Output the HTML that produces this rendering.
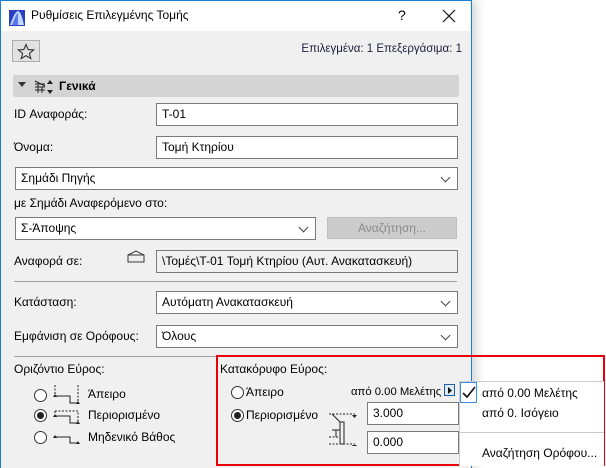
<!DOCTYPE html>
<html><head><meta charset="utf-8"><style>
*{box-sizing:border-box;margin:0;padding:0}
body{width:606px;height:468px;background:#fff;position:relative;overflow:hidden;font-family:"Segoe UI","Liberation Sans","DejaVu Sans",sans-serif;font-size:12px;color:#000}
.a{position:absolute}
#dlg{left:0;top:0;width:472px;height:468px;background:#f0f0f0;border:1px solid #1a7fd4;border-bottom:none;box-shadow:4px 0 10px rgba(0,0,0,.18)}
#title{left:1px;top:1px;width:469px;height:30px;background:#fff}
.inp{position:absolute;background:#fff;border:1px solid #7a7a7a;height:23px;padding:3px 5px;line-height:15px;white-space:nowrap}
.dd::after{content:"";position:absolute;right:8px;top:6px;width:6px;height:6px;border-right:1px solid #444;border-bottom:1px solid #444;transform:rotate(45deg)}
.sep{position:absolute;height:1px;background:#a0a0a0}
.rad{position:absolute;width:13px;height:13px;border:1px solid #333;border-radius:50%;background:#fff}
.rad.on::after{content:"";position:absolute;left:2px;top:2px;width:7px;height:7px;border-radius:50%;background:#222}
</style></head><body>
<div id="dlg" class="a"></div>
<div id="title" class="a"></div>
<svg class="a" style="left:9px;top:10px" width="16" height="16"><rect x="0" y="0" width="16" height="16" fill="#2a3fbf"/><path d="M1 15 Q6 1 9 1 Q12 1 15 15Z" fill="#bfd6ff"/><path d="M3 15 Q7 4 9 3 L9 15Z" fill="#5a78e8"/></svg>
<div class="a" style="left:31px;top:8px;font-size:12px;color:#000">Ρυθμίσεις Επιλεγμένης Τομής</div>
<div class="a" style="left:398px;top:7px;font-size:14px">?</div>
<svg class="a" style="left:442px;top:9px" width="14" height="14"><path d="M1 1L13 13M13 1L1 13" stroke="#111" stroke-width="1.2"/></svg>
<div class="a" style="left:12px;top:40px;width:28px;height:22px;border:1px solid #adadad;background:#e1e1e1"></div>
<svg class="a" style="left:17px;top:43px" width="18" height="17"><path d="M9 1.5L11.2 6.6 16.6 6.9 12.4 10.4 13.8 15.6 9 12.7 4.2 15.6 5.6 10.4 1.4 6.9 6.8 6.6Z" fill="none" stroke="#333" stroke-width="1.1"/></svg>
<div class="a" style="right:144px;top:43px;color:#1e1e3c;font-size:11.5px">Επιλεγμένα: 1 Επεξεργάσιμα: 1</div>
<div class="a" style="left:13px;top:75px;width:446px;height:22px;background:#d4d4d4;border-radius:2px"></div>
<svg class="a" style="left:18px;top:82px" width="8" height="6"><path d="M0 0H8L4 5Z" fill="#333"/></svg>
<svg class="a" style="left:33px;top:78px" width="22" height="18"><path d="M2 3L12 8M2 6H12M2 9H12M5 6V15M9 9V15M2 12H12" stroke="#222" stroke-width="1" fill="none"/><path d="M14 6L17 2 20 6Z M14 12L17 16 20 12Z" fill="#222"/></svg>
<div class="a" style="left:59px;top:79px;font-weight:bold">Γενικά</div>
<div class="a" style="left:14px;top:107px">ID Αναφοράς:</div>
<div class="inp" style="left:156px;top:103px;width:302px">T-01</div>
<div class="a" style="left:14px;top:140px">Όνομα:</div>
<div class="inp" style="left:156px;top:136px;width:302px">Τομή Κτηρίου</div>
<div class="inp dd" style="left:15px;top:167px;width:443px">Σημάδι Πηγής</div>
<div class="a" style="left:14px;top:196px">με Σημάδι Αναφερόμενο στο:</div>
<div class="inp dd" style="left:15px;top:217px;width:301px">Σ-Άποψης</div>
<div class="a" style="left:327px;top:217px;width:130px;height:22px;background:#cccccc;border:1px solid #bfbfbf;color:#8a8a8a;text-align:center;line-height:20px">Αναζήτηση...</div>
<div class="a" style="left:14px;top:254px">Αναφορά σε:</div>
<svg class="a" style="left:127px;top:250px" width="18" height="13"><path d="M1 5L9 1 17 5V12H1Z M1 5H17" fill="none" stroke="#333"/></svg>
<div class="inp" style="left:156px;top:250px;width:302px;background:#f0f0f0">\Τομές\T-01 Τομή Κτηρίου (Αυτ. Ανακατασκευή)</div>
<div class="sep" style="left:14px;top:281px;width:443px"></div>
<div class="a" style="left:14px;top:295px">Κατάσταση:</div>
<div class="inp dd" style="left:156px;top:291px;width:302px">Αυτόματη Ανακατασκευή</div>
<div class="a" style="left:14px;top:329px">Εμφάνιση σε Ορόφους:</div>
<div class="inp dd" style="left:156px;top:325px;width:302px">Όλους</div>
<div class="sep" style="left:14px;top:356px;width:443px"></div>
<div class="a" style="left:14px;top:362px">Οριζόντιο Εύρος:</div>
<div class="rad" style="left:34px;top:389px"></div>
<div class="rad on" style="left:34px;top:409px"></div>
<div class="rad" style="left:34px;top:431px"></div>
<svg class="a" style="left:52px;top:384px" width="30" height="60"><g stroke="#222" fill="none" stroke-width="1"><path d="M3 1V12M26 1V19" stroke-dasharray="2 1.5"/><path d="M3 12H18V19H26"/><path d="M3 27H26V39M3 27V32" stroke-dasharray="2 1.5"/><path d="M3 32H18V39H26"/><path d="M3 53H18V59H26"/></g><path d="M1 13h4l-2-3z M24 20h4l-2-3z M1 33h4l-2-3z M24 40h4l-2-3z M1 54h4l-2-3z M24 60h4l-2-3z" fill="#222"/></svg>
<div class="a" style="left:88px;top:387px">Άπειρο</div>
<div class="a" style="left:88px;top:408px">Περιορισμένο</div>
<div class="a" style="left:88px;top:430px">Μηδενικό Βάθος</div>
<div class="a" style="left:216px;top:355px;width:389px;height:111px;border:2px solid #e8000a"></div>
<div class="a" style="left:220px;top:362px">Κατακόρυφο Εύρος:</div>
<div class="rad" style="left:231px;top:386px"></div>
<div class="a" style="left:246px;top:385px">Άπειρο</div>
<div class="rad on" style="left:231px;top:409px"></div>
<div class="a" style="left:246px;top:408px">Περιορισμένο</div>
<div class="a" style="left:351px;top:386px;font-size:11.3px">από 0.00 Μελέτης</div>
<div class="a" style="left:444px;top:384px;width:11px;height:12px;border:1px solid #1f5fa8;background:#dfe9f5"></div>
<svg class="a" style="left:447px;top:387px" width="6" height="7"><path d="M1 0L5 3.5 1 7Z" fill="#111"/></svg>
<svg class="a" style="left:328px;top:410px" width="30" height="36"><g stroke="#222" fill="none" stroke-width="1"><path d="M1 4H27M1 34H27M1 27H10" stroke-dasharray="2 1.5"/><path d="M4 4L12 12H16V34H12V20H4M8 20V27"/><path d="M12 12V20"/></g><path d="M24 5h5l-2.5 3z M24 35h5l-2.5 3z" fill="#222"/></svg>
<div class="inp" style="left:367px;top:402px;width:92px">3.000</div>
<div class="inp" style="left:367px;top:431px;width:92px">0.000</div>
<div class="a" style="left:459px;top:381px;width:145px;height:85px;background:#fff;border:1px solid #ccc;border-right:none;border-bottom:none"></div>
<div class="a" style="left:460px;top:382px;width:17px;height:21px;border:1px solid #3a8ee6;background:#fff"></div>
<svg class="a" style="left:462px;top:386px" width="14" height="13"><path d="M1 7L5 11 13 1" fill="none" stroke="#111" stroke-width="1.6"/></svg>
<div class="a" style="left:482px;top:386px">από 0.00 Μελέτης</div>
<div class="a" style="left:482px;top:406px">από 0. Ισόγειο</div>
<div class="a" style="left:460px;top:432px;width:144px;height:1px;background:#ccc"></div>
<div class="a" style="left:482px;top:446px">Αναζήτηση Ορόφου...</div>
</body></html>
